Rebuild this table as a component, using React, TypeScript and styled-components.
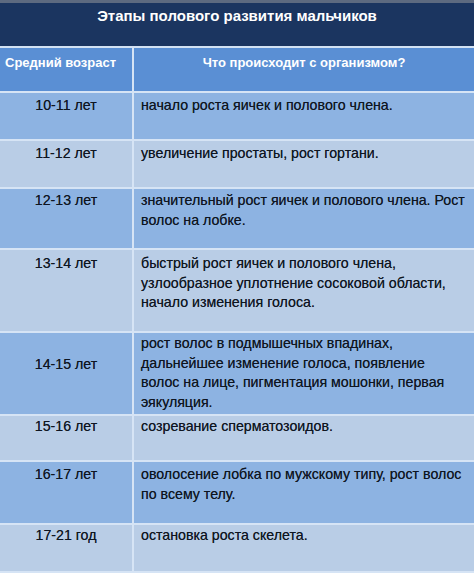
import styled, { createGlobalStyle } from 'styled-components';

const GlobalStyle = createGlobalStyle`
  html, body {
    margin: 0;
    padding: 0;
    background: #b9cde6;
  }
  body {
    font-family: "Liberation Sans", Arial, sans-serif;
  }
`;

type Stage = {
  age: string;
  lines: string[];
  height: number;
  pad?: number;
  agePad?: number;
  tone: 'dark' | 'light';
};

const stages: Stage[] = [
  { age: '10-11 лет', lines: ['начало роста яичек и полового члена.'], height: 46, tone: 'dark' },
  { age: '11-12 лет', lines: ['увеличение простаты, рост гортани.'], height: 46, tone: 'light' },
  {
    age: '12-13 лет',
    lines: ['значительный рост яичек и полового члена. Рост', 'волос на лобке.'],
    height: 59,
    pad: 2,
    tone: 'dark',
  },
  {
    age: '13-14 лет',
    lines: [
      'быстрый рост яичек и полового члена,',
      'узлообразное уплотнение сосоковой области,',
      'начало изменения голоса.',
    ],
    height: 81,
    pad: 4,
    tone: 'light',
  },
  {
    age: '14-15 лет',
    lines: [
      'рост волос в подмышечных впадинах,',
      'дальнейшее изменение голоса, появление',
      'волос на лице, пигментация мошонки, первая',
      'эякуляция.',
    ],
    height: 81,
    pad: 1,
    agePad: 22,
    tone: 'dark',
  },
  { age: '15-16 лет', lines: ['созревание сперматозоидов.'], height: 44, pad: 1, tone: 'light' },
  {
    age: '16-17 лет',
    lines: ['оволосение лобка по мужскому типу, рост волос', 'по всему телу.'],
    height: 61,
    tone: 'dark',
  },
  { age: '17-21 год', lines: ['остановка роста скелета.'], height: 46, pad: 1, tone: 'light' },
];

function App() {
  return (
    <>
      <GlobalStyle />
      <Page>
        <Title>Этапы полового развития мальчиков</Title>
        <Table>
          <HeadCell>Средний возраст</HeadCell>
          <HeadCell $center>Что происходит с организмом?</HeadCell>
          {stages.map((s) => (
            <Row key={s.age}>
              <AgeCell $tone={s.tone} $h={s.height} $pad={s.agePad ?? s.pad ?? 3}>
                {s.age}
              </AgeCell>
              <TextCell $tone={s.tone} $h={s.height} $pad={s.pad ?? 3}>
                {s.lines.map((l) => (
                  <Line key={l}>{l}</Line>
                ))}
              </TextCell>
            </Row>
          ))}
        </Table>
      </Page>
    </>
  );
}

const Page = styled.div`
  width: 474px;
  height: 573px;
  overflow: hidden;
  border-top: 3px solid #5d6a80;
  box-sizing: border-box;
  background: #b9cde6;
`;

const Title = styled.div`
  height: 45px;
  box-sizing: border-box;
  padding-top: 3px;
  background: #1b3560;
  border-bottom: 2px solid #d3e2f4;
  color: #ffffff;
  font-weight: bold;
  font-size: 15px;
  text-align: center;
  line-height: 20px;
`;

const Table = styled.div`
  display: grid;
  grid-template-columns: 132px 1fr;
  column-gap: 2px;
  background: #d6e4f5;
`;

const HeadCell = styled.div<{ $center?: boolean }>`
  height: 45px;
  box-sizing: border-box;
  padding: 6px ${(p) => (p.$center ? '0' : '0 0 5px')};
  text-align: ${(p) => (p.$center ? 'center' : 'left')};
  background: #5a8fd4;
  color: #ffffff;
  font-weight: bold;
  font-size: 13px;
  line-height: 18px;
  border-bottom: 2px solid #d6e4f5;
`;

const Row = styled.div`
  display: contents;
`;

const Cell = styled.div<{ $tone: 'dark' | 'light'; $h: number; $pad: number }>`
  height: ${(p) => p.$h + 2}px;
  box-sizing: border-box;
  padding-top: ${(p) => p.$pad}px;
  background: ${(p) => (p.$tone === 'dark' ? '#8db3e2' : '#b9cde6')};
  border-bottom: 2px solid #d6e4f5;
  color: #0e1521;
  font-size: 14.2px;
  line-height: 19.5px;
  text-shadow: 0 0 0.5px rgba(14, 21, 33, 0.7);
`;

const AgeCell = styled(Cell)`
  text-align: center;
`;

const TextCell = styled(Cell)`
  padding-left: 7px;
`;

const Line = styled.div`
  white-space: nowrap;
`;

export default App;
